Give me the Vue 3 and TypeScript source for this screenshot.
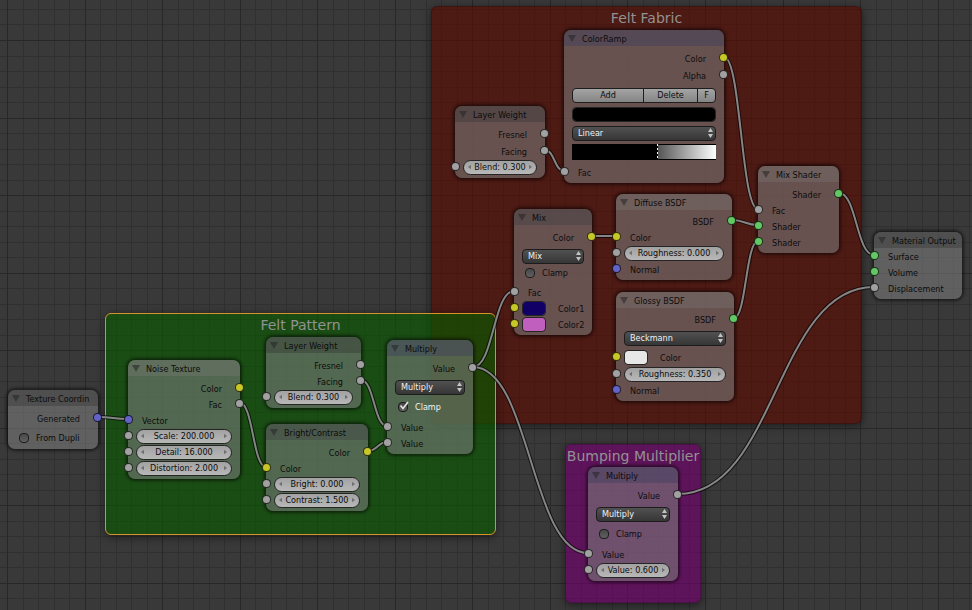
<script setup lang="ts">
import { computed, reactive } from 'vue'

type Socket = 'grey' | 'yellow' | 'blue' | 'green'

interface Row {
  kind: 'output' | 'input' | 'number' | 'select' | 'check' | 'swatch' | 'buttons' | 'band' | 'ramp'
  label?: string
  value?: string
  socket?: Socket
  checked?: boolean
  options?: string[]
  gap?: number
}

interface TreeNode {
  title: string
  tone: 'source' | 'texture' | 'converter' | 'tint' | 'shader' | 'sink'
  x: number
  y: number
  width: number
  rows: Row[]
}

interface Frame {
  title: string
  tone: 'red' | 'green' | 'purple'
  x: number
  y: number
  width: number
  height: number
}

const frames: Frame[] = [
  { title: 'Felt Fabric', tone: 'red', x: 431, y: 6, width: 431, height: 418 },
  { title: 'Felt Pattern', tone: 'green', x: 105, y: 313, width: 391, height: 222 },
  { title: 'Bumping Multiplier', tone: 'purple', x: 565, y: 444, width: 136, height: 159 }
]

const mathModes = ['Add', 'Subtract', 'Multiply', 'Divide']

const nodes = reactive<TreeNode[]>([
  {
    title: 'Texture Coordin', tone: 'source', x: 8, y: 390, width: 90,
    rows: [
      { kind: 'output', label: 'Generated', socket: 'blue', gap: 4 },
      { kind: 'check', label: 'From Dupli', checked: false, gap: 4 }
    ]
  },
  {
    title: 'Noise Texture', tone: 'texture', x: 128, y: 360, width: 112,
    rows: [
      { kind: 'output', label: 'Color', socket: 'yellow', gap: 4 },
      { kind: 'output', label: 'Fac', socket: 'grey' },
      { kind: 'input', label: 'Vector', socket: 'blue' },
      { kind: 'number', label: 'Scale', value: 'Scale: 200.000', socket: 'grey' },
      { kind: 'number', label: 'Detail', value: 'Detail: 16.000', socket: 'grey' },
      { kind: 'number', label: 'Distortion', value: 'Distortion: 2.000', socket: 'grey' }
    ]
  },
  {
    title: 'Layer Weight', tone: 'source', x: 266, y: 337, width: 95,
    rows: [
      { kind: 'output', label: 'Fresnel', socket: 'grey', gap: 4 },
      { kind: 'output', label: 'Facing', socket: 'grey' },
      { kind: 'number', label: 'Blend', value: 'Blend: 0.300', socket: 'grey' }
    ]
  },
  {
    title: 'Bright/Contrast', tone: 'tint', x: 266, y: 424, width: 102,
    rows: [
      { kind: 'output', label: 'Color', socket: 'yellow', gap: 4 },
      { kind: 'input', label: 'Color', socket: 'yellow' },
      { kind: 'number', label: 'Bright', value: 'Bright: 0.000', socket: 'grey' },
      { kind: 'number', label: 'Contrast', value: 'Contrast: 1.500', socket: 'grey' }
    ]
  },
  {
    title: 'Multiply', tone: 'converter', x: 387, y: 340, width: 86,
    rows: [
      { kind: 'output', label: 'Value', socket: 'grey', gap: 4 },
      { kind: 'select', label: 'Operation', value: 'Multiply', options: mathModes, gap: 3 },
      { kind: 'check', label: 'Clamp', checked: true, gap: 4 },
      { kind: 'input', label: 'Value', socket: 'grey', gap: 4 },
      { kind: 'input', label: 'Value', socket: 'grey' }
    ]
  },
  {
    title: 'Layer Weight', tone: 'source', x: 455, y: 106, width: 90,
    rows: [
      { kind: 'output', label: 'Fresnel', socket: 'grey', gap: 4 },
      { kind: 'output', label: 'Facing', socket: 'grey', gap: 1 },
      { kind: 'number', label: 'Blend', value: 'Blend: 0.300', socket: 'grey' }
    ]
  },
  {
    title: 'ColorRamp', tone: 'converter', x: 564, y: 30, width: 160,
    rows: [
      { kind: 'output', label: 'Color', socket: 'yellow', gap: 4 },
      { kind: 'output', label: 'Alpha', socket: 'grey', gap: 1 },
      { kind: 'buttons', gap: 4 },
      { kind: 'band', label: 'Stop color', value: '#000000', gap: 3 },
      { kind: 'select', label: 'Interpolation', value: 'Linear', options: ['Linear', 'Ease', 'Constant'], gap: 3 },
      { kind: 'ramp', gap: 3 },
      { kind: 'input', label: 'Fac', socket: 'grey', gap: 4 }
    ]
  },
  {
    title: 'Mix', tone: 'tint', x: 514, y: 209, width: 78,
    rows: [
      { kind: 'output', label: 'Color', socket: 'yellow', gap: 4 },
      { kind: 'select', label: 'Blend mode', value: 'Mix', options: ['Mix', 'Add', 'Multiply'], gap: 3 },
      { kind: 'check', label: 'Clamp', checked: false, gap: 1 },
      { kind: 'input', label: 'Fac', socket: 'grey', gap: 3 },
      { kind: 'swatch', label: 'Color1', value: '#110066', socket: 'yellow' },
      { kind: 'swatch', label: 'Color2', value: '#c05fbd', socket: 'yellow' }
    ]
  },
  {
    title: 'Diffuse BSDF', tone: 'shader', x: 616, y: 194, width: 116,
    rows: [
      { kind: 'output', label: 'BSDF', socket: 'green', gap: 3 },
      { kind: 'input', label: 'Color', socket: 'yellow' },
      { kind: 'number', label: 'Roughness', value: 'Roughness: 0.000', socket: 'grey' },
      { kind: 'input', label: 'Normal', socket: 'blue' }
    ]
  },
  {
    title: 'Glossy BSDF', tone: 'shader', x: 616, y: 292, width: 118,
    rows: [
      { kind: 'output', label: 'BSDF', socket: 'green', gap: 3 },
      { kind: 'select', label: 'Distribution', value: 'Beckmann', options: ['Sharp', 'Beckmann', 'GGX'], gap: 3 },
      { kind: 'swatch', label: 'Color', value: '#e7e7e7', socket: 'yellow', gap: 3 },
      { kind: 'number', label: 'Roughness', value: 'Roughness: 0.350', socket: 'grey', gap: 1 },
      { kind: 'input', label: 'Normal', socket: 'blue' }
    ]
  },
  {
    title: 'Mix Shader', tone: 'shader', x: 758, y: 166, width: 81,
    rows: [
      { kind: 'output', label: 'Shader', socket: 'green', gap: 4 },
      { kind: 'input', label: 'Fac', socket: 'grey' },
      { kind: 'input', label: 'Shader', socket: 'green' },
      { kind: 'input', label: 'Shader', socket: 'green' }
    ]
  },
  {
    title: 'Material Output', tone: 'sink', x: 874, y: 232, width: 88,
    rows: [
      { kind: 'input', label: 'Surface', socket: 'green' },
      { kind: 'input', label: 'Volume', socket: 'green' },
      { kind: 'input', label: 'Displacement', socket: 'grey' }
    ]
  },
  {
    title: 'Multiply', tone: 'converter', x: 588, y: 467, width: 90,
    rows: [
      { kind: 'output', label: 'Value', socket: 'grey', gap: 4 },
      { kind: 'select', label: 'Operation', value: 'Multiply', options: mathModes, gap: 3 },
      { kind: 'check', label: 'Clamp', checked: false, gap: 4 },
      { kind: 'input', label: 'Value', socket: 'grey', gap: 4 },
      { kind: 'number', label: 'Value', value: 'Value: 0.600', socket: 'grey' }
    ]
  }
])

// Each link runs from an output socket to an input socket.
const links: [number, number, number, number][] = [
  [98, 417, 128, 419],
  [240, 403, 266, 467],
  [361, 380, 387, 426],
  [368, 451, 387, 442],
  [473, 367, 514, 291],
  [473, 367, 588, 553],
  [545, 150, 564, 171],
  [724, 57, 758, 209],
  [592, 236, 616, 236],
  [732, 220, 758, 225],
  [734, 318, 758, 241],
  [839, 193, 874, 255],
  [678, 494, 874, 287]
]

const linkPaths = computed(() =>
  links.map(([x1, y1, x2, y2]) => {
    const pull = (x2 - x1) / 2
    return `M${x1} ${y1}C${x1 + pull} ${y1} ${x2 - pull} ${y2} ${x2} ${y2}`
  })
)

const gridStep = 15.51
const gridLine = (origin: number, i: number) => Math.round(origin + i * gridStep)
const steps = Array.from({ length: 260 }, (_, i) => i - 2)
const gridPath = (list: number[]) =>
  list.map((i) => `M${gridLine(7, i)} 0h1v4000h-1zM0 ${gridLine(40, i)}h4000v1h-4000z`).join('')
const minorGrid = gridPath(steps.filter((i) => i % 5 !== 0))
const majorGrid = gridPath(steps.filter((i) => i % 5 === 0))

const place = (b: { x: number; y: number; width: number; height?: number }) => ({
  left: `${b.x}px`,
  top: `${b.y}px`,
  width: `${b.width}px`,
  height: b.height ? `${b.height}px` : undefined
})
</script>

<template>
  <main class="editor">
    <svg class="grid" aria-hidden="true">
      <path class="minor" :d="minorGrid" />
      <path class="major" :d="majorGrid" />
    </svg>

    <section v-for="f in frames" :key="f.title" class="frame" :class="f.tone" :style="place(f)">
      <h2>{{ f.title }}</h2>
    </section>

    <svg class="links" aria-hidden="true">
      <g v-for="(d, i) in linkPaths" :key="i">
        <path class="casing" :d="d" />
        <path class="core" :d="d" />
      </g>
    </svg>

    <article v-for="(n, ni) in nodes" :key="ni" class="node" :class="n.tone" :style="place(n)">
      <header>
        <button class="fold" type="button" :aria-label="`Collapse ${n.title}`">
          <svg viewBox="0 0 8 7"><path d="M0 0h8L4 7z" /></svg>
        </button>
        <h3>{{ n.title }}</h3>
      </header>
      <div
        v-for="(r, ri) in n.rows"
        :key="ri"
        class="row"
        :class="r.kind"
        :style="{ marginTop: `${r.gap ?? 0}px` }"
      >
        <i v-if="r.socket" class="socket" :class="r.socket"></i>

        <span v-if="r.kind === 'output' || r.kind === 'input'" class="name">{{ r.label }}</span>

        <div v-else-if="r.kind === 'number'" class="field">
          <svg class="arrow" viewBox="0 0 4 6"><path d="M4 0v6L0 3z" /></svg>
          <input v-model="r.value" type="text" :aria-label="r.label" />
          <svg class="arrow" viewBox="0 0 4 6"><path d="M0 0v6l4-3z" /></svg>
        </div>

        <div v-else-if="r.kind === 'select'" class="menu">
          <select v-model="r.value" :aria-label="r.label">
            <option v-for="o in r.options" :key="o">{{ o }}</option>
          </select>
          <svg viewBox="0 0 5 10"><path d="M0 4h5L2.500 0zM0 6h5L2.500 10z" /></svg>
        </div>

        <label v-else-if="r.kind === 'check'" class="tick" :class="{ on: r.checked }">
          <span class="box">
            <input v-model="r.checked" type="checkbox" />
            <svg v-if="r.checked" viewBox="0 0 12 12"><path d="M2.500 5.500 5 8.500 10 2" /></svg>
          </span>
          <span>{{ r.label }}</span>
        </label>

        <label v-else-if="r.kind === 'swatch'" class="chip">
          <input v-model="r.value" type="color" />
          <span class="name">{{ r.label }}</span>
        </label>

        <div v-else-if="r.kind === 'buttons'" class="group">
          <button type="button">Add</button>
          <button type="button">Delete</button>
          <button type="button">F</button>
        </div>

        <input v-else-if="r.kind === 'band'" v-model="r.value" class="wide" type="color" :aria-label="r.label" />

        <div v-else class="gradient">
          <span class="solid"></span>
          <span class="stop"></span>
          <span class="blend"></span>
        </div>
      </div>
    </article>
  </main>
</template>

<style>
body {
  margin: 0;
  background: #393939;
}
</style>

<style scoped>
.editor {
  position: relative;
  min-height: 100vh;
  overflow: hidden;
  background: #393939;
  color: #0c0c0c;
  font: 9px/16px 'DejaVu Sans Condensed', 'DejaVu Sans', sans-serif;
}

.grid,
.links {
  position: absolute;
  inset: 0;
  width: 100%;
  height: 100%;
}

.minor {
  fill: #303030;
}

.major {
  fill: #282828;
}

.links path {
  fill: none;
}

.links .casing {
  stroke: rgba(0, 0, 0, 0.65);
  stroke-width: 4;
}

.links .core {
  stroke: #858585;
  stroke-width: 2;
}

.frame {
  position: absolute;
  box-sizing: border-box;
  border: 1px solid transparent;
  border-radius: 6px;
  box-shadow: 0 2px 8px rgba(0, 0, 0, 0.5);
}

.frame.red {
  background: rgba(88, 9, 0, 0.65);
  border-color: rgba(0, 0, 0, 0.2);
}

.frame.green {
  background: rgba(9, 88, 0, 0.65);
  border-color: #d6932a;
}

.frame.purple {
  background: rgba(114, 0, 108, 0.65);
  border-color: rgba(0, 0, 0, 0.2);
}

h2 {
  display: flex;
  justify-content: center;
  margin: 0;
  color: #929292;
  font-family: 'DejaVu Sans', sans-serif;
  font-size: 14px;
  font-weight: 400;
  line-height: 22px;
  white-space: nowrap;
}

.node {
  position: absolute;
  box-sizing: border-box;
  padding-bottom: 3px;
  border-radius: 7px;
  background: rgba(124, 124, 124, 0.58);
  box-shadow: 0 0 3px 2px rgba(0, 0, 0, 0.5);
}

.node header {
  display: flex;
  align-items: center;
  height: 16px;
  padding-left: 4px;
  gap: 6px;
  border-radius: 7px 7px 0 0;
  background: rgba(50, 50, 50, 0.35);
}

.node.converter header {
  background: rgba(60, 60, 95, 0.4);
}

.node.texture header,
.node.shader header {
  background: rgba(125, 125, 125, 0.3);
}

.node.tint header {
  background: rgba(60, 60, 65, 0.35);
}

h3 {
  margin: 0;
  padding-top: 2px;
  font-size: 9px;
  font-weight: 400;
  line-height: 16px;
  white-space: nowrap;
}

.fold {
  display: flex;
  width: 8px;
  padding: 0;
  border: 0;
  background: none;
}

.fold svg {
  width: 8px;
  height: 7px;
  fill: rgba(40, 40, 40, 0.6);
}

.row {
  position: relative;
  display: flex;
  align-items: center;
  height: 16px;
  padding: 0 8px;
}

.output {
  justify-content: flex-end;
  padding-right: 18px;
}

.input {
  padding-left: 14px;
}

.name,
.tick {
  white-space: nowrap;
}

.name {
  padding-top: 2px;
}

.socket {
  position: absolute;
  top: 3px;
  left: -4px;
  box-sizing: border-box;
  width: 9px;
  height: 9px;
  border: 1px solid rgba(0, 0, 0, 0.75);
  border-radius: 50%;
}

.output .socket {
  right: -4px;
  left: auto;
}

.socket.grey {
  background: #a1a1a1;
}

.socket.yellow {
  background: #c7c729;
}

.socket.blue {
  background: #6363c7;
}

.socket.green {
  background: #63c763;
}

.field {
  display: flex;
  flex: 1;
  align-items: center;
  box-sizing: border-box;
  min-width: 0;
  height: 15px;
  padding: 0 4px;
  border: 1px solid #252525;
  border-radius: 8px;
  background: linear-gradient(#a2a2a2, #b8b8b8);
}

.field input {
  flex: 1;
  min-width: 0;
  height: 13px;
  padding: 0;
  border: 0;
  background: none;
  color: #0c0c0c;
  font: inherit;
  text-align: center;
}

.arrow {
  flex: none;
  width: 3px;
  height: 6px;
  fill: #707070;
}

.menu {
  position: relative;
  flex: 1;
  min-width: 0;
  height: 15px;
}

.menu select {
  appearance: none;
  display: block;
  box-sizing: border-box;
  width: 100%;
  height: 15px;
  padding: 0 5px;
  border: 1px solid #1c1c1c;
  border-radius: 4px;
  background: linear-gradient(#515151, #363636);
  color: #f0f0f0;
  font: inherit;
  line-height: 13px;
}

.menu svg {
  position: absolute;
  top: 2px;
  right: 3px;
  width: 5px;
  height: 10px;
  fill: #c4c4c4;
}

.tick {
  display: flex;
  align-items: center;
  padding-left: 3px;
  gap: 7px;
}

.tick.on {
  color: #f4f4f4;
}

.box {
  position: relative;
  display: flex;
}

.box input {
  appearance: none;
  box-sizing: border-box;
  width: 10px;
  height: 10px;
  margin: 0;
  border: 1px solid #1c1c1c;
  border-radius: 4px;
  background: linear-gradient(#484848, #606060);
}

.box svg {
  position: absolute;
  top: -2px;
  left: 0;
  width: 12px;
  height: 12px;
  fill: none;
  stroke: #e6e6e6;
  stroke-width: 1.6;
}

.chip {
  display: flex;
  align-items: center;
  gap: 12px;
}

.chip input,
.wide {
  appearance: none;
  box-sizing: border-box;
  width: 24px;
  height: 15px;
  padding: 0;
  border: 1px solid #252525;
  border-radius: 4px;
  background: none;
  overflow: hidden;
}

.wide {
  flex: 1;
}

.chip input::-webkit-color-swatch-wrapper,
.wide::-webkit-color-swatch-wrapper {
  padding: 0;
}

.chip input::-webkit-color-swatch,
.wide::-webkit-color-swatch {
  border: 0;
  border-radius: 3px;
}

.group {
  display: grid;
  flex: 1;
  grid-template-columns: 70fr 54fr 18fr;
  box-sizing: border-box;
  height: 15px;
  border: 1px solid #1e1e1e;
  border-radius: 4px;
  background: linear-gradient(#a4a4a4, #858585);
}

.group button {
  min-width: 0;
  padding: 0;
  border: 0;
  background: none;
  color: #0c0c0c;
  font: inherit;
  line-height: 13px;
}

.group button + button {
  border-left: 1px solid #1e1e1e;
}

.gradient {
  display: flex;
  flex: 1;
  height: 16px;
}

.solid {
  flex: 85;
  background: #000;
}

.stop {
  width: 1px;
  background: repeating-linear-gradient(#fff 0 2px, #000 2px 4px);
}

.blend {
  flex: 58;
  box-sizing: border-box;
  border: solid #000;
  border-width: 1px 0;
  background: linear-gradient(90deg, #555, #fff);
}
</style>
